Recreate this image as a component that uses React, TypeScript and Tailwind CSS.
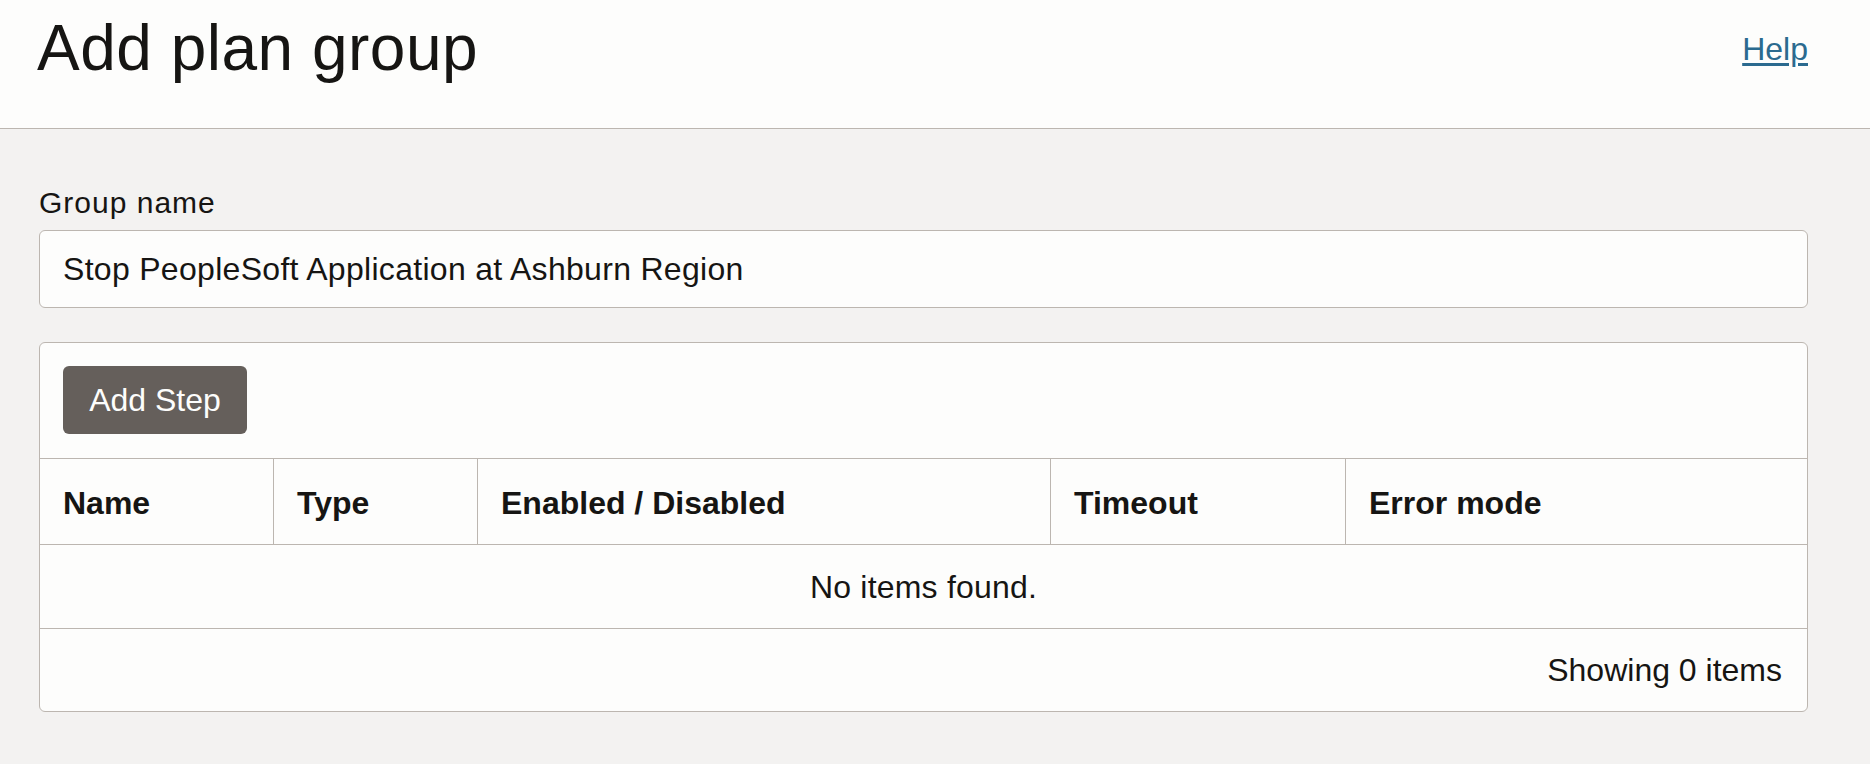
import React from "react";

const font = { fontFamily: '"Liberation Sans", Arial, Helvetica, sans-serif' };

export default function App() {
  const cols = [
    { label: "Name", cls: "w-[233px]" },
    { label: "Type", cls: "w-[204px] border-l border-[#bcb6b0]" },
    { label: "Enabled / Disabled", cls: "w-[573px] border-l border-[#bcb6b0]" },
    { label: "Timeout", cls: "w-[295px] border-l border-[#bcb6b0]" },
    { label: "Error mode", cls: "flex-1 border-l border-[#bcb6b0]" },
  ];
  return (
    <div className="min-h-screen bg-[#f3f2f1] text-[#161513] font-['Liberation_Sans',Arial,sans-serif]" style={font}>
      <header className="h-[129px] box-border bg-[#fdfdfc] border-b border-[#bcb6b0] flex justify-between items-start pl-[37px] pr-[62px]">
        <h1 className="mt-[16px] text-[64px] leading-[64px] font-normal tracking-[0.5px]">Add plan group</h1>
        <a href="#" className="mt-[33px] text-[32px] leading-[32px] text-[#2b6a8f] underline underline-offset-[3px]">
          Help
        </a>
      </header>
      <main className="pl-[39px] pr-[62px] pt-[59px] pb-[52px]">
        <label className="block text-[30px] leading-[30px] tracking-[1px]">Group name</label>
        <input
          readOnly
          value="Stop PeopleSoft Application at Ashburn Region"
          className="mt-[12px] block w-full h-[78px] box-border bg-[#fdfdfc] border border-[#bcb6b0] rounded-[6px] pl-[23px] text-[32px] tracking-[0.3px] text-[#161513] outline-none"
          style={font}
        />
        <section className="mt-[34px] bg-[#fdfdfc] border border-[#bcb6b0] rounded-[6px]">
          <div className="pt-[23px] pb-[24px] pl-[23px]">
            <button className="w-[184px] h-[68px] rounded-[6px] bg-[#655f5b] text-[#fdfdfc] text-[32px] leading-[32px]" style={font}>
              Add Step
            </button>
          </div>
          <div className="flex h-[86px] border-t border-[#bcb6b0]">
            {cols.map((c) => (
              <div key={c.label} className={`${c.cls} flex items-center pl-[23px] pt-[2px] text-[32px] font-bold`}>
                {c.label}
              </div>
            ))}
          </div>
          <div className="h-[84px] border-t border-[#bcb6b0] flex items-center justify-center text-[32px] tracking-[0.2px]">
            No items found.
          </div>
          <div className="h-[83px] border-t border-[#bcb6b0] flex items-center justify-end pr-[25px] text-[32px]">
            Showing 0 items
          </div>
        </section>
      </main>
    </div>
  );
}
